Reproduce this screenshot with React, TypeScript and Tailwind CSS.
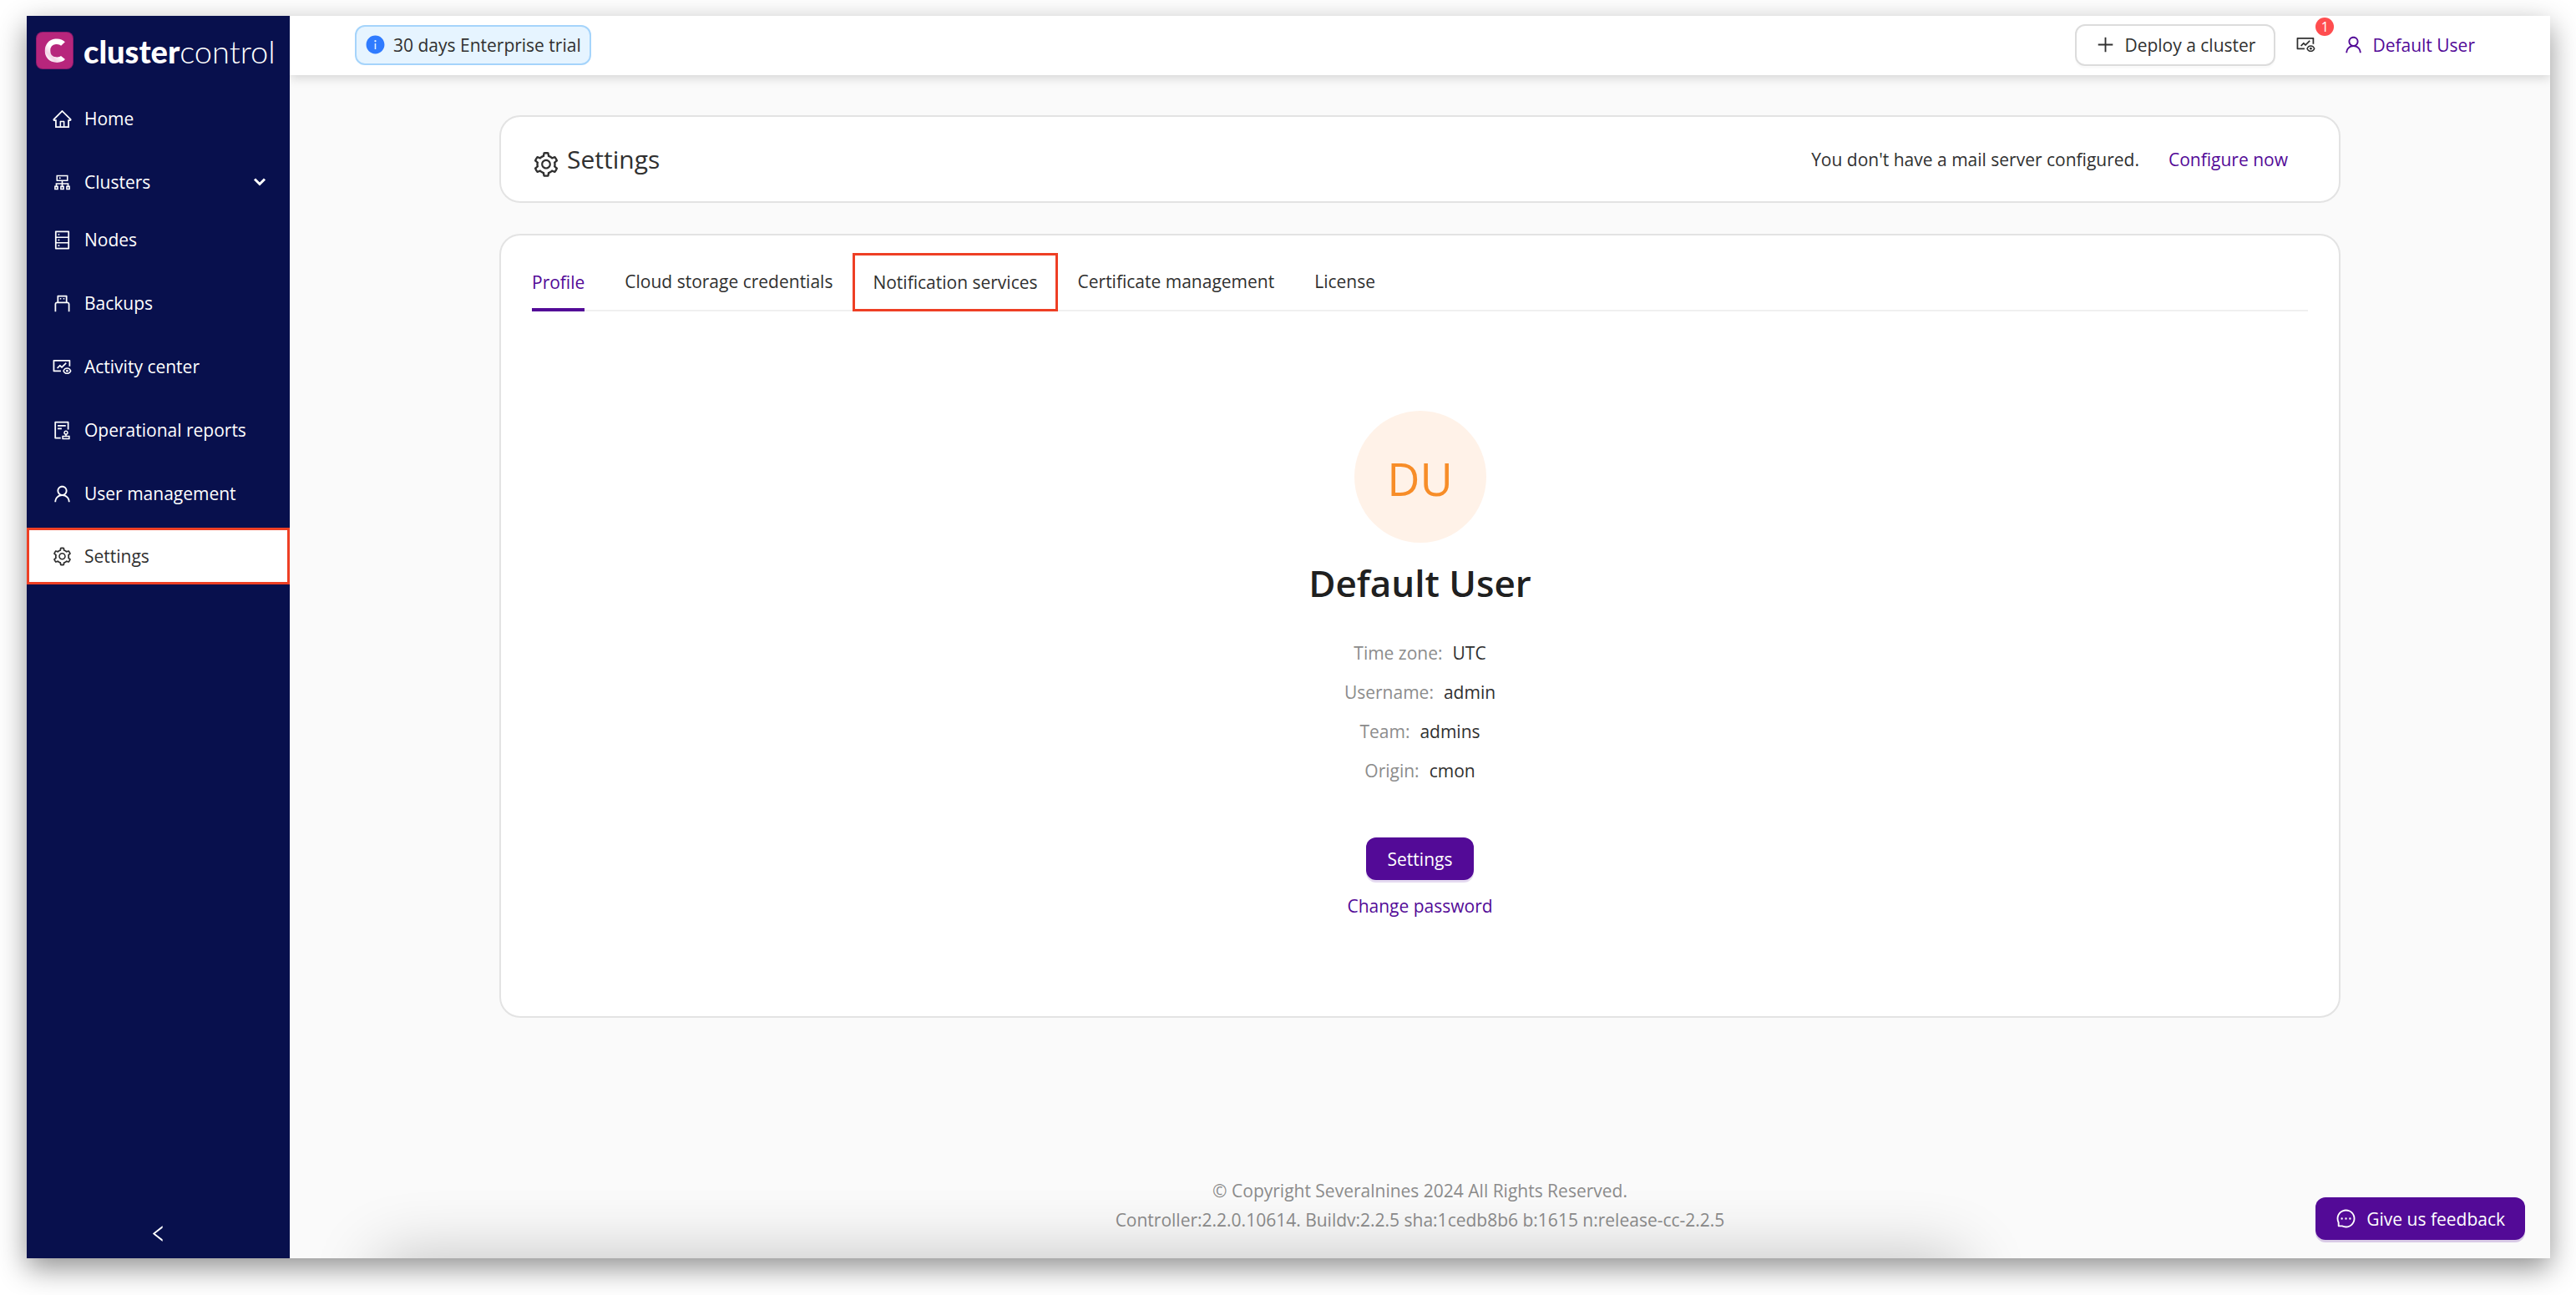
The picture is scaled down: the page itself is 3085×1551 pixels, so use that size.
import type { ReactNode } from "react";
import type { IconType } from "react-icons";
import {
  AiFillInfoCircle,
  AiOutlineAudit,
  AiOutlineCluster,
  AiOutlineDatabase,
  AiOutlineFundView,
  AiOutlineHome,
  AiOutlineLeft,
  AiOutlineMessage,
  AiOutlinePlus,
  AiOutlineSetting,
  AiOutlineUsb,
  AiOutlineUser,
} from "react-icons/ai";

type NavItem = { label: string; icon: IconType; spacing: string; expandable?: boolean; active?: boolean };

const NAV: NavItem[] = [
  { label: "Home", icon: AiOutlineHome, spacing: "mt-[18px]" },
  { label: "Clusters", icon: AiOutlineCluster, spacing: "mt-2", expandable: true },
  { label: "Nodes", icon: AiOutlineDatabase, spacing: "mt-px" },
  { label: "Backups", icon: AiOutlineUsb, spacing: "mt-2" },
  { label: "Activity center", icon: AiOutlineFundView, spacing: "mt-2" },
  { label: "Operational reports", icon: AiOutlineAudit, spacing: "mt-2" },
  { label: "User management", icon: AiOutlineUser, spacing: "mt-2" },
  { label: "Settings", icon: AiOutlineSetting, spacing: "mt-[7px]", active: true },
];

const TABS = ["Profile", "Cloud storage credentials", "Notification services", "Certificate management", "License"];

const DETAILS = [
  ["Time zone:", "UTC"],
  ["Username:", "admin"],
  ["Team:", "admins"],
  ["Origin:", "cmon"],
];

function Logo() {
  return (
    <a href="#" className="flex h-[71px] items-center gap-3 pt-3 pl-[11px] text-white">
      <svg viewBox="0 0 45 45" className="size-[45px] shrink-0" fill="none" aria-hidden="true">
        <defs>
          <linearGradient id="logo-c" x1="12" y1="32" x2="24" y2="20" gradientUnits="userSpaceOnUse">
            <stop offset="0" stopColor="#ffffff" />
            <stop offset="0.35" stopColor="#f3d3e6" />
            <stop offset="0.8" stopColor="#ffffff" />
          </linearGradient>
        </defs>
        <rect width="45" height="45" rx="8" fill="#8c1a6e" />
        <rect x="1" y="1" width="43" height="43" rx="7" fill="#b7267c" />
        <path
          d="M32.5 14.5C30 11.8 26.5 11.5 23.5 11.8C17.5 12.3 14 17 14 22.8C14 29 17.8 33.3 24 33.6C27.5 33.8 30.5 33.4 32.5 31"
          stroke="url(#logo-c)"
          strokeWidth="6.5"
        />
      </svg>
      <span className="font-['Lato',sans-serif] text-[38px] leading-none whitespace-nowrap">
        <span className="font-black">cluster</span>
        <span className="font-light">control</span>
      </span>
    </a>
  );
}

function Sidebar() {
  return (
    <aside className="flex w-[315px] shrink-0 flex-col bg-[#08104d] text-white">
      <Logo />
      <nav aria-label="Main">
        <ul>
          {NAV.map(({ label, icon: Icon, spacing, expandable, active }) => (
            <li key={label} className={spacing}>
              <a
                href="#"
                aria-current={active ? "page" : undefined}
                className={
                  active
                    ? "flex h-[68px] items-center gap-3.5 border-3 border-[#ee3f24] bg-white pl-[27px] text-[#303030]"
                    : "flex h-[68px] items-center gap-3.5 pr-7 pl-[30px]"
                }
              >
                <Icon className="size-[25px]" />
                {label}
                {expandable && (
                  <svg viewBox="0 0 16 12" className="ml-auto h-3 w-4" fill="none" stroke="currentColor" strokeWidth="3" aria-hidden="true">
                    <path d="M2 2.5L8 8.5L14 2.5" />
                  </svg>
                )}
              </a>
            </li>
          ))}
        </ul>
      </nav>
      <button type="button" aria-label="Collapse menu" className="mt-auto mb-[17px] flex justify-center">
        <AiOutlineLeft className="size-[25px]" />
      </button>
    </aside>
  );
}

function Header() {
  return (
    <header className="relative flex h-[71px] items-center justify-between bg-white pr-[90px] pb-0.5 pl-[78px] shadow-[0_3px_12px_rgba(0,0,0,0.16)]">
      <div className="flex h-12 items-center gap-[9px] rounded-xl border-2 border-[#a5d4fb] bg-[#e6f4ff] px-2.5">
        <AiFillInfoCircle className="size-[25px] text-[#2f7bff]" />
        30 days Enterprise trial
      </div>
      <div className="flex items-center">
        <button
          type="button"
          className="flex h-[50px] items-center gap-2.5 rounded-xl border-2 border-[#dcdcdc] bg-white px-[22px] shadow-[0_3px_0_rgba(0,0,0,0.02)]"
        >
          <AiOutlinePlus className="size-[25px]" />
          Deploy a cluster
        </button>
        <button type="button" aria-label="Activity, 1 new" className="relative ml-6">
          <AiOutlineFundView className="size-[25px]" />
          <span className="absolute -top-5 left-6 flex size-[22px] items-center justify-center rounded-full bg-[#ff4d4f] text-base text-white">
            1
          </span>
        </button>
        <a href="#" className="ml-8 flex items-center gap-2.5 text-[#530a97]">
          <AiOutlineUser className="size-[25px]" />
          Default User
        </a>
      </div>
    </header>
  );
}

function Card({ className, children }: { className: string; children: ReactNode }) {
  return <section className={`rounded-[25px] border-2 border-[#e3e3e3] bg-white px-[37px] ${className}`}>{children}</section>;
}

function Tabs() {
  return (
    <div role="tablist" className="flex h-[70px] gap-12 border-b-2 border-[#f0f0f0]">
      {TABS.map((tab) => (
        <button
          key={tab}
          type="button"
          role="tab"
          aria-selected={tab === "Profile"}
          className={
            tab === "Profile"
              ? "-mb-0.5 border-b-4 border-[#530a97] pt-1 font-medium text-[#530a97]"
              : tab === "Notification services"
                ? "-mx-6 -mb-0.5 border-3 border-[#ee3f24] px-[21px]"
                : ""
          }
        >
          {tab}
        </button>
      ))}
    </div>
  );
}

function Profile() {
  return (
    <div role="tabpanel" className="flex flex-col items-center pt-[119px]">
      <div className="flex size-[158px] items-center justify-center rounded-full bg-[#fff2e8] pt-1 text-[54px] text-[#f78d28]">DU</div>
      <h2 className="mt-[18px] text-[44px] leading-[60px] font-semibold text-[#202020]">Default User</h2>
      <dl className="mt-[31px]">
        {DETAILS.map(([term, value]) => (
          <div key={term} className="flex justify-center gap-3 leading-[47px]">
            <dt className="text-[#8c8c8c]">{term}</dt>
            <dd>{value}</dd>
          </div>
        ))}
      </dl>
      <button type="button" className="mt-14 h-[51px] rounded-xl bg-[#530a97] px-[26px] text-white shadow-[0_3px_0_rgba(83,10,151,0.15)]">
        Settings
      </button>
      <a href="#" className="mt-4 text-[#530a97]">
        Change password
      </a>
    </div>
  );
}

export default function App() {
  return (
    <div className="flex min-h-screen bg-white pt-[19px] pr-[31px] pb-11 pl-8 font-['Open_Sans','Noto_Sans',sans-serif] text-[21px] leading-[30px] text-[#303030]">
      <div className="relative flex flex-1 shadow-[0_12px_32px_rgba(0,0,0,0.43)]">
        <Sidebar />
        <div className="relative flex min-w-0 flex-1 flex-col overflow-hidden bg-[#fafafa]">
          <Header />
          <main className="px-[251px] pt-12">
            <Card className="flex items-center justify-between py-[27px]">
              <h1 className="flex items-end gap-2 text-[30px] leading-[47px]">
                <AiOutlineSetting className="size-[34px]" />
                Settings
              </h1>
              <p className="flex gap-[35px] pr-6">
                You don't have a mail server configured.
                <a href="#" className="text-[#530a97]">
                  Configure now
                </a>
              </p>
            </Card>
            <Card className="mt-[37px] pt-[21px] pb-[117px]">
              <Tabs />
              <Profile />
            </Card>
          </main>
          <footer className="mt-auto pt-16 pb-7 text-center leading-[35px] text-[#8c8c8c]">
            <p>© Copyright Severalnines 2024 All Rights Reserved.</p>
            <p>Controller:2.2.0.10614. Buildv:2.2.5 sha:1cedb8b6 b:1615 n:release-cc-2.2.5</p>
          </footer>
          <div className="pointer-events-none absolute top-full right-[26%] left-[4%] h-20 shadow-[0_0_80px_rgba(0,0,0,0.24)]" />
          <button
            type="button"
            className="absolute right-[30px] bottom-[22px] flex h-[51px] items-center gap-3 rounded-xl bg-[#530a97] px-6 text-white shadow-[0_3px_0_rgba(83,10,151,0.2)]"
          >
            <AiOutlineMessage className="size-[25px]" />
            Give us feedback
          </button>
        </div>
      </div>
    </div>
  );
}
